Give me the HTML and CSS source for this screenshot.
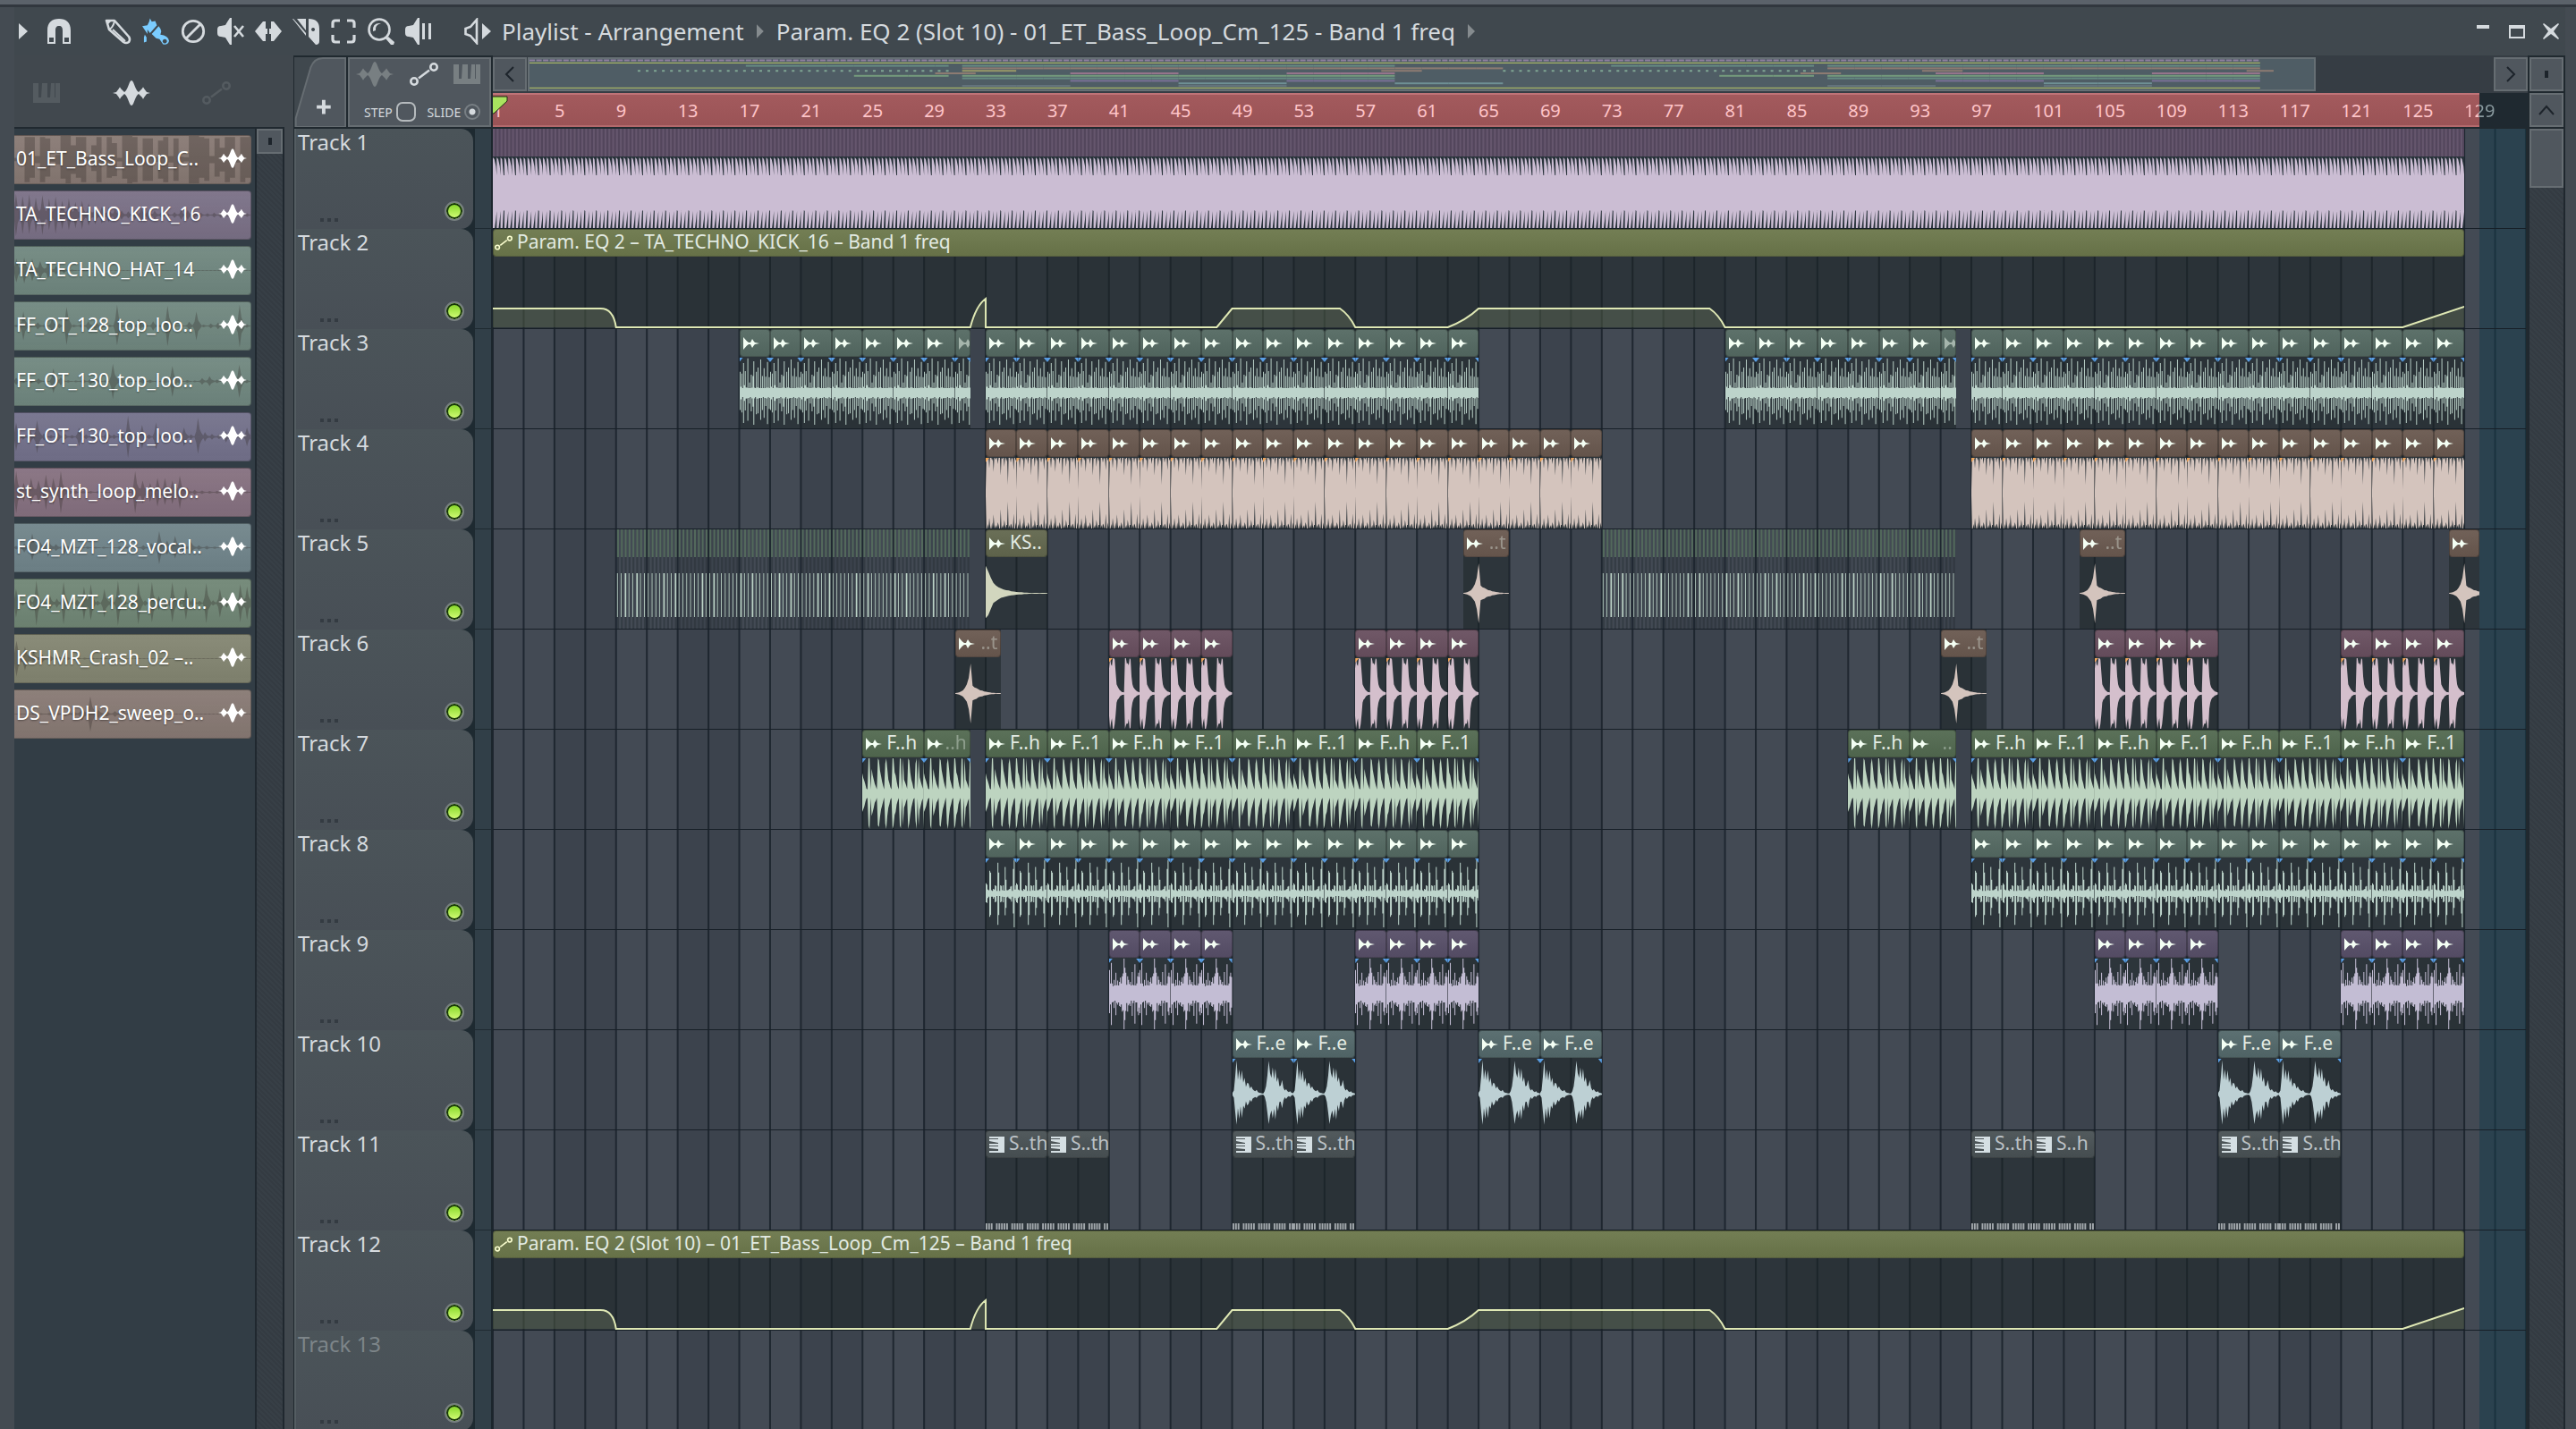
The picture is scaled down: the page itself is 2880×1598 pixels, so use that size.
FILE: index.html
```html
<!DOCTYPE html>
<html lang="en">
<head>
    <meta charset="UTF-8">
    <meta name="viewport" content="width=device-width, initial-scale=1.0">
    <title>Playlist - Arrangement</title>
    <link rel="stylesheet" href="styles.css">
</head>
<body>
    <svg class="sprite" aria-hidden="true">
        <symbol id="i-wave" viewBox="0 0 42 28">
            <path d="M0 14 L4 13 L7 9 Q8 6 9 9 L13 13 Q15 12 17 7 L19 2 Q21 -2 23 2 L25 7 Q27 12 29 13 L33 9 Q34 6 35 9 L38 13 L42 14 L38 15 L35 19 Q34 22 33 19 L29 15 Q27 16 25 21 L23 26 Q21 30 19 26 L17 21 Q15 16 13 15 L9 19 Q8 22 7 19 L4 15 Z"/>
        </symbol>
        <symbol id="i-auto" viewBox="0 0 32 26">
            <g fill="none" stroke="currentColor" stroke-width="2.6"><circle cx="5" cy="21" r="3.7"/><circle cx="27" cy="5" r="3.7"/><path d="M10 17.5 L22 8.500"/></g>
        </symbol>
        <symbol id="i-piano" viewBox="0 0 30 22">
            <path d="M0 0H6V16H9L10 0H16V16H19L20 0H24V16H25V0H30V22H0Z"/>
        </symbol>
        <symbol id="i-clip" viewBox="0 0 18 14">
            <path d="M0 0 L4 4.500 L6 6 L8 6 L10 2 L12 5 L13 6 L18 7 L13 8 L12 9 L10 12 L8 8 L6 8 L4 9.500 L0 14Z"/>
        </symbol>
        <symbol id="i-keys" viewBox="0 0 17 18">
            <path d="M0 0H17V18H0V16H10V14L0 13V11H10V10H0V8H10V7L0 5V3H10V2H0Z"/>
        </symbol>
    </svg>

    <div class="desktop-strip"></div>
    <div class="window">
        <header class="titlebar">
            <nav class="tools">
                <button class="tool menu" aria-label="Menu"><svg viewBox="0 0 10 18"><path d="M0 0L10 9L0 18Z"/></svg></button>
                <button class="tool magnet" aria-label="Snap"><svg viewBox="0 0 30 30"><path d="M2 29V14C2 5 7 1 15 1S28 5 28 14V29H19V14C19 11 18 9 15 9S11 11 11 14V29ZM4 22V27H9V22ZM21 22V27H26V22Z" fill-rule="evenodd"/></svg></button>
                <button class="tool" aria-label="Draw"><svg viewBox="0 0 30 30"><g fill="none" stroke="currentColor" stroke-width="2.600" stroke-linejoin="round"><path d="M2 3H11L27 21Q29 24 27 27Q24 29 21 27L5 13L2 3Z"/><path d="M4 13Q9 12 11 4M9 13L23 26" stroke-width="2"/></g><path d="M2 3H8L3 8Z"/></svg></button>
                <button class="tool active" aria-label="Paint"><svg viewBox="0 0 31 30"><path d="M0 9L6 8L8 4L9 0L11 4L15 3L17 8L9 17L6 13L6 18L4 15ZM11 18L19 9L21 12L22 15L21 19Q30 20 31 26Q30 31 24 30L20 24L16 23ZM26 24a2.500 2.500 0 1 0 .1 0ZM3 19L5 22V27L2 28V22Z" fill-rule="evenodd"/></svg></button>
                <button class="tool" aria-label="Delete"><svg viewBox="0 0 30 30"><g fill="none" stroke="currentColor" stroke-width="2.800"><circle cx="15" cy="15" r="11.700"/><path d="M7 23L23 7"/></g></svg></button>
                <button class="tool" aria-label="Mute"><svg viewBox="0 0 30 30"><path d="M0 13Q0 9 4 9L9 8L14 0H16V30H14L9 22L4 21Q0 21 0 17Z"/><path d="M19 9L29 21M29 9L19 21" stroke="currentColor" stroke-width="2.600"/></svg></button>
                <button class="tool" aria-label="Slip"><svg viewBox="0 0 30 30"><path d="M0 15L9 4H12V26H9ZM30 15L21 4H18V26H21ZM12 12H14V18H12ZM16 12H18V18H16Z"/></svg></button>
                <button class="tool" aria-label="Slice"><svg viewBox="0 0 30 30"><path d="M0 1H1L15 17V20ZM5 1H15V14ZM18 1Q30 1 30 12V26Q30 30 26 30L18 21ZM23 11A2 2 0 1 0 23.100 11Z" fill-rule="evenodd"/></svg></button>
                <button class="tool" aria-label="Select"><svg viewBox="0 0 30 30"><path d="M3 11V6Q3 3 6 3H11M19 3H24Q27 3 27 6V11M27 19V24Q27 27 24 27H19M11 27H6Q3 27 3 24V19" fill="none" stroke="currentColor" stroke-width="3.200"/></svg></button>
                <button class="tool" aria-label="Zoom"><svg viewBox="0 0 30 30"><circle cx="13" cy="13" r="11.500" fill="none" stroke="currentColor" stroke-width="2.600"/><path d="M6 15Q5 5 15 6Q8 8 9 14ZM20 23L23 21L30 27L29 30H26Z"/></svg></button>
                <button class="tool" aria-label="Playback"><svg viewBox="0 0 30 30"><path d="M0 13Q0 9 4 9L9 8L14 0H16V30H14L9 22L4 21Q0 21 0 17ZM19 6H22V24H19ZM26 6H29V24H26Z"/></svg></button>
                <button class="tool speaker" aria-label="Playlist options"><svg viewBox="0 0 30 30"><path d="M1.500 12L7 10L14 2V28L7 20L1.500 18Z" fill="none" stroke="currentColor" stroke-width="2.600"/><path d="M20 6L30 15L20 24Z"/></svg></button>
            </nav>
            <h1 class="crumbs">
                <span>Playlist - Arrangement</span><i class="arrow"></i>
                <span>Param. EQ 2 (Slot 10) - 01_ET_Bass_Loop_Cm_125 - Band 1 freq</span><i class="arrow"></i>
            </h1>
            <div class="window-buttons">
                <button aria-label="Minimise"><svg viewBox="0 0 20 20"><path d="M3 3H17V7H3Z"/></svg></button>
                <button aria-label="Maximise"><svg viewBox="0 0 20 20"><path d="M1 3H19V18H1ZM3 7V16H17V7Z" fill-rule="evenodd"/></svg></button>
                <button aria-label="Close"><svg viewBox="0 0 20 20"><path d="M2 1L10 7L18 1L19 2L13 10L19 18L18 19L10 13L2 19L1 18L7 10L1 2Z"/></svg></button>
            </div>
        </header>

        <div class="main">
            <aside class="picker">
                <div class="picker-tabs">
                    <button aria-label="Patterns" class="off"><svg class="piano"><use href="#i-piano"/></svg></button>
                    <button aria-label="Audio clips"><svg class="wave"><use href="#i-wave"/></svg></button>
                    <button aria-label="Automation clips" class="off"><svg class="auto"><use href="#i-auto"/></svg></button>
                </div>
                <div class="picker-body">
                    <ul class="picker-list" id="pickerList"></ul>
                    <div class="scroll"><button class="scroll-button" aria-label="Picker options"><i class="dot"></i></button></div>
                </div>
            </aside>

            <section class="playlist">
                <div class="playlist-head">
                    <div class="track-tools">
                        <button class="add-track" aria-label="Add track"><svg viewBox="0 0 58 80"><path class="edge" d="M1 80V70L18 12Q22 1 32 1H58V80Z"/><path class="plus" d="M25 55H31V49H35V55H41V59H35V65H31V59H25Z"/></svg></button>
                        <div class="modes">
                            <div class="mode-row">
                                <button aria-label="Audio" class="off"><svg class="wave"><use href="#i-wave"/></svg></button>
                                <button aria-label="Automation"><svg class="auto"><use href="#i-auto"/></svg></button>
                                <button aria-label="Pattern" class="off"><svg class="piano"><use href="#i-piano"/></svg></button>
                            </div>
                            <div class="mode-row">
                                <label for="step">STEP</label><input type="checkbox" id="step">
                                <label for="slide">SLIDE</label><input type="radio" id="slide" checked>
                            </div>
                        </div>
                    </div>
                    <div class="time-head">
                        <div class="overview-row">
                            <button class="nav-button" aria-label="Scroll left"><svg viewBox="0 0 20 20"><path d="M14 2L6 10L14 18"/></svg></button>
                            <div class="overview"><svg id="overview" class="overview-map" viewBox="0 0 1320 34" preserveAspectRatio="none"></svg></div>
                            <button class="nav-button" aria-label="Scroll right"><svg viewBox="0 0 20 20"><path d="M6 2L14 10L6 18"/></svg></button>
                        </div>
                        <div class="ruler">
                            <div class="song-range"></div>
                            <div class="ruler-labels" id="ruler"></div>
                            <svg class="playhead" viewBox="0 0 18 22"><path d="M-3 1H16V6L1 20H-3Z"/></svg>
                        </div>
                    </div>
                    <div class="corner">
                        <button class="nav-button" aria-label="Options"><i class="dot"></i></button>
                        <button class="nav-button" aria-label="Scroll up"><svg viewBox="0 0 20 20"><path d="M2 15L10 6L18 15"/></svg></button>
                    </div>
                </div>
                <div class="playlist-body">
                    <div class="heads" id="heads"></div>
                    <div class="timeline">
                        <svg id="bars" class="bars" viewBox="0 0 1320 10" preserveAspectRatio="none"></svg>
                        <div class="after-end"></div>
                        <div id="lanes"></div>
                    </div>
                    <div class="scroll"><div class="thumb"></div></div>
                </div>
            </section>
        </div>
    </div>
    <script src="script.js"></script>
</body>
</html>
```
FILE: styles.css
```css
* {
    box-sizing: border-box;
}
body {
    margin: 0;
    height: 100vh;
    overflow: hidden;
    display: flex;
    flex-direction: column;
    background-color: #41484e;
    color: #d5dade;
    font-family: "Noto Sans", "Open Sans", sans-serif;
}
button {
    padding: 0;
    border: none;
    background: none;
    color: inherit;
    font: inherit;
    display: flex;
    align-items: center;
    justify-content: center;
}
svg {
    display: block;
    fill: currentColor;
}
.sprite {
    position: absolute;
    width: 0;
    height: 0;
}
.desktop-strip {
    height: 8px;
    flex: none;
    background-color: #5b626a;
    border-bottom: 3px solid #31373e;
}
.window {
    flex: 1;
    min-height: 0;
    display: flex;
    flex-direction: column;
    border-left: 16px solid #444b52;
    border-right: 12px solid #444b52;
}

/* title bar */
.titlebar {
    height: 54px;
    flex: none;
    display: flex;
    align-items: center;
    padding: 4px 6px 4px 5px;
    background-color: #40484e;
}
.tools {
    display: flex;
    align-items: center;
    gap: 12px;
}
.tool svg {
    width: 30px;
    height: 30px;
}
.tool.menu svg {
    width: 10px;
    height: 18px;
}
.tool.magnet {
    margin: 0 24px 0 8px;
}
.tool.active {
    color: #7accff;
}
.tool.speaker {
    margin-left: 24px;
}
.crumbs {
    flex: 1;
    margin: 0 0 0 12px;
    display: flex;
    align-items: center;
    font-size: 26px;
    font-weight: normal;
    white-space: nowrap;
}
.arrow {
    width: 8px;
    height: 16px;
    margin: 0 14px;
    background-color: #858b8e;
    clip-path: polygon(0 0, 100% 50%, 0 100%);
}
.window-buttons {
    display: flex;
    gap: 18px;
}
.window-buttons svg {
    width: 20px;
    height: 20px;
}

.main {
    flex: 1;
    min-height: 0;
    display: flex;
    gap: 10px;
}
.wave {
    width: 42px;
    height: 28px;
}
.auto {
    width: 32px;
    height: 26px;
}
.piano {
    width: 30px;
    height: 22px;
}

/* picker */
.picker {
    width: 302px;
    flex: none;
    display: flex;
    flex-direction: column;
}
.picker-tabs {
    height: 82px;
    flex: none;
    display: flex;
    align-items: center;
    justify-content: space-between;
    padding: 22px 60px 18px 21px;
    border-bottom: 2px solid #202930;
}
.picker-tabs .off {
    color: #545b60;
}
.picker-body {
    flex: 1;
    min-height: 0;
    display: flex;
    background-color: #323d45;
}
.picker-list {
    flex: 1;
    margin: 0;
    padding: 7px 4px 0 0;
    list-style: none;
}
.sample {
    position: relative;
    height: 55px;
    margin-bottom: 7px;
    padding: 0 4px 4px 2px;
    display: flex;
    align-items: center;
    justify-content: space-between;
    border-radius: 0 4px 4px 0;
    border: 1px solid rgba(0, 0, 0, 0.25);
    border-left: none;
    background-image: linear-gradient(rgba(255, 255, 255, 0.06), rgba(0, 0, 0, 0.04));
    color: #fff;
    font-size: 21px;
    white-space: nowrap;
    text-shadow: 0 1px 2px rgba(0, 0, 0, 0.4);
}
.sample .shape {
    position: absolute;
    left: 0;
    top: 0;
    width: 100%;
    height: 100%;
    fill: rgba(50, 45, 40, 0.32);
}
.sample span {
    position: relative;
}
.sample .wave {
    position: relative;
    width: 32px;
    height: 28px;
}
.scroll {
    flex: none;
    border-left: 2px solid #20282f;
    border-right: 2px solid #20282f;
    background: repeating-linear-gradient(45deg, #373f46 0 2px, #343b42 2px 4px);
}
.picker .scroll {
    width: 33px;
}
.playlist .scroll {
    width: 42px;
}
.scroll-button, .thumb, .nav-button {
    background-color: #50575e;
    border: 2px solid #666d72;
}
.scroll-button {
    width: 100%;
    height: 28px;
}
.thumb {
    height: 66px;
}
.dot {
    width: 4px;
    height: 8px;
    background-color: #1d242b;
}

/* playlist header */
.playlist {
    flex: 1;
    min-width: 0;
    display: flex;
    flex-direction: column;
    background-color: #20292f;
}
.playlist-head {
    height: 82px;
    flex: none;
    display: flex;
}
.track-tools {
    width: 223px;
    flex: none;
    display: flex;
    gap: 2px;
    padding: 2px 2px 0 1px;
}
.add-track {
    width: 58px;
    height: 78px;
    background-color: #40484e;
}
.add-track svg {
    width: 58px;
    height: 78px;
}
.edge {
    fill: #50575e;
    stroke: #666d72;
    stroke-width: 2px;
}
.plus {
    fill: #d5dade;
}
.modes {
    flex: 1;
    height: 78px;
    background-color: #50575e;
    border: 2px solid #666d72;
    display: flex;
    flex-direction: column;
    justify-content: space-between;
    padding: 3px 10px 4px 7px;
}
.mode-row {
    display: flex;
    align-items: center;
    justify-content: space-between;
}
.mode-row .off {
    color: #787f82;
}
.mode-row label {
    font-size: 14px;
    margin-left: 9px;
}
.mode-row input {
    appearance: none;
    margin: 0;
}
.mode-row input[type="checkbox"] {
    width: 22px;
    height: 22px;
    border: 2px solid #b5babd;
    border-radius: 7px;
}
.mode-row input[type="radio"] {
    width: 18px;
    height: 18px;
    border: 2px solid #787f84;
    border-radius: 50%;
    background: radial-gradient(#d5dade 0 3px, #50575e 4px);
}
.time-head {
    flex: 1;
    min-width: 0;
}
.overview-row {
    height: 42px;
    display: flex;
    padding: 2px 0;
    background-color: #363d44;
}
.nav-button {
    width: 38px;
    height: 38px;
    flex: none;
}
.nav-button svg {
    width: 20px;
    height: 20px;
    fill: none;
    stroke: #1d242b;
    stroke-width: 2px;
}
.overview {
    flex: 1;
    margin: 0 1px;
}
.overview-map {
    width: 91%;
    height: 38px;
    background-color: #4f5d65;
    border: 2px solid #666f74;
}
.ruler {
    position: relative;
    height: 38px;
    padding-right: 2px;
    background-color: #1f2930;
    display: grid;
    grid-template-columns: repeat(132, 1fr);
    overflow: hidden;
}
.song-range {
    grid-area: 1 / 1 / 2 / 130;
    background: linear-gradient(#a35a5d, #9a5356);
    border-top: 2px solid #bf7478;
    border-bottom: 2px solid #b3696c;
}
.ruler-labels {
    grid-area: 1 / 1 / 2 / -1;
    display: grid;
    grid-template-columns: repeat(33, 1fr);
    align-items: center;
    color: #ffc4c8;
    font-size: 20px;
}
.ruler-labels span {
    width: 0;
}
.ruler-labels .last {
    width: 40px;
    color: transparent;
    background: linear-gradient(to right, #ffc4c8 16px, #8a9a9f 16px);
    background-clip: text;
}
.playhead {
    position: absolute;
    left: 0;
    top: 3px;
    width: 18px;
    height: 22px;
    fill: #a9e35f;
    stroke: #1d2a12;
    stroke-width: 1px;
}
.corner {
    width: 42px;
    flex: none;
    display: flex;
    flex-direction: column;
    gap: 2px;
    padding: 2px;
}

/* playlist body */
.playlist-body {
    flex: 1;
    min-height: 0;
    display: flex;
    overflow: hidden;
}
.heads {
    width: 223px;
    flex: none;
    padding-left: 1px;
    border-right: 2px solid #1c262d;
}
.head {
    height: 112px;
    display: grid;
    grid-template-columns: 200px 18px;
    gap: 2px;
    background-color: #1e2a31;
}
.head::after {
    content: "";
    margin-bottom: 1px;
    background-color: #313f48;
}
.head-card {
    position: relative;
    padding: 0 12px 0 2px;
    border-left: 2px solid #545d62;
    border-radius: 0 14px 14px 0;
    background: linear-gradient(#4b5459, #484f56);
    font-size: 24px;
    line-height: 30px;
}
.head-card.idle {
    color: #7d8589;
}
.led {
    position: absolute;
    right: 10px;
    bottom: 9px;
    width: 22px;
    height: 22px;
    border: 2px solid #777f80;
    border-radius: 50%;
    background: linear-gradient(#7ed321, #d9ff7d);
    box-shadow: inset 0 0 0 2px #17350a;
}
.more {
    position: absolute;
    left: 27px;
    bottom: 8px;
    width: 20px;
    height: 4px;
    background: repeating-linear-gradient(to right, #343b42 0 4px, transparent 4px 8px);
}
.timeline {
    position: relative;
    flex: 1;
    min-width: 0;
    padding-right: 2px;
    display: grid;
    grid-template-columns: repeat(132, 1fr);
    overflow: hidden;
}
.bars {
    grid-area: 1 / 1 / 2 / -1;
    width: 100%;
    height: 100%;
}
.after-end {
    grid-area: 1 / 130 / 2 / -1;
    background-color: rgba(24, 60, 74, 0.55);
}
#lanes {
    grid-area: 1 / 1 / 2 / -1;
    height: 0;
}
.lane {
    height: 112px;
    display: grid;
    grid-template-columns: repeat(132, 1fr);
    border-bottom: 1px solid #171f27;
}
.clip {
    grid-row: 1;
    min-width: 0;
    height: 111px;
    display: flex;
    flex-direction: column;
    background-color: rgba(28, 36, 38, 0.55);
}
.clip-head {
    height: 31px;
    flex: none;
    display: flex;
    align-items: center;
    padding: 0 3px;
    border: 1px solid rgba(0, 0, 0, 0.25);
    border-radius: 4px;
    font-size: 21px;
    line-height: 26px;
    white-space: nowrap;
    overflow: hidden;
    background-image: linear-gradient(rgba(255, 255, 255, 0.05), rgba(0, 0, 0, 0.05));
    color: #e2eae2;
}
.clip-head svg {
    width: 18px;
    height: 14px;
    flex: none;
    color: #f4fff4;
}
.clip-head span {
    margin-left: 5px;
    padding-bottom: 3px;
}
.clip-head .dim {
    margin-left: auto;
    opacity: 0.4;
}
.clip.short .clip-head svg {
    opacity: 0.5;
}
.clip-body {
    position: relative;
    flex: 1;
    margin-top: 1px;
    min-height: 0;
}
.clip-body svg {
    position: absolute;
    left: 0;
    top: 0;
    width: 100%;
    height: 100%;
}
.mark-blue .clip-body::before, .mark-orange .clip-body::before, .mark-blue .clip-body::after {
    content: "";
    position: absolute;
    z-index: 1;
    top: 0;
    left: 0;
    width: 4px;
    height: 5px;
    background-color: #5a9fe6;
    clip-path: polygon(0 0, 100% 0, 0 100%);
}
.mark-blue .clip-body::after {
    left: auto;
    right: 0;
    clip-path: polygon(0 0, 100% 0, 100% 100%);
}
.mark-orange .clip-body::before {
    background-color: #f0a55a;
}
.green .clip-head { background-color: #546962; }
.green .clip-body { color: #bdd4cb; }
.brown .clip-head { background-color: #69594f; }
.brown .clip-body { color: #d4c4bd; }
.olive .clip-head { background-color: #62674e; }
.olive .clip-body { color: #d2d6be; }
.rose .clip-head { background-color: #684f5f; }
.rose .clip-body { color: #d4bfcc; }
.leaf .clip-head { background-color: #526950; }
.leaf .clip-body { color: #bdd4c0; }
.violet .clip-head { background-color: #574f68; }
.violet .clip-body { color: #c3bdd4; }
.teal .clip-head { background-color: #53686a; }
.teal .clip-body { color: #bdd0d4; }
.pattern .clip-head { background-color: #495154; color: #bcc2c6; }
.pattern .clip-head svg { width: 17px; height: 18px; color: #d5dfe3; }
.pattern .clip-body svg { color: #a2a8ac; }
.automation .clip-head { background-color: #6b774b; padding-left: 1px; }
.automation .clip-head svg { width: 20px; height: 19px; color: #fbffd0; }
.dense {
    grid-row: 1;
    width: 100%;
    height: 111px;
}
```
FILE: script.js
```js
const NS = 'http://www.w3.org/2000/svg';
const ROW = 112;

// peak levels (0-100) of one clip, evenly spaced from its start to its end
const waves = {
    hat: [60, 18, 55, 14, 85, 22, 62, 16, 15, 98, 14, 30, 14, 52, 15, 48, 90, 15, 14, 60, 16, 72, 15, 14, 95, 14, 48, 14, 70, 14, 46, 15, 88, 15, 45, 14],
    bass: [8, 100, 100, 97, 100, 70, 100, 100, 100, 92, 100, 60, 100, 100, 95, 100, 100, 82, 100, 100, 100, 50, 100, 97, 100, 100, 75, 100, 100, 90, 100, 24, 100, 100, 100, 86, 100, 98, 100, 65, 100, 100, 92, 100],
    synth: [70, 100, 82, 78, 100, 100, 96, 60, 26, 20, 15, 11, 8, 6, 4, 4, 3, 100, 100, 84, 86, 80, 100, 96, 48, 26, 18, 14, 11, 8, 6, 5, 4, 3],
    perc: [58, 44, 36, 26, 14, 12, 100, 100, 12, 70, 52, 40, 28, 20, 12, 100, 94, 66, 50, 34, 22, 12, 85, 100, 70, 40, 30, 18, 12, 100, 100, 60, 52, 34, 20, 12, 100, 98, 12, 100, 40, 32, 24, 14, 100, 94, 60, 40, 30, 16, 12, 85, 100, 14, 100, 46, 34, 24, 14, 100],
    tick: [30, 26, 12, 10, 65, 60, 10, 8, 14, 12, 24, 22, 8, 88, 60, 8, 24, 22, 10, 24, 9, 76, 40, 10, 10, 12, 14, 20, 22, 8, 70, 95, 12, 24],
    pluck: [68, 30, 88, 30, 22, 40, 24, 60, 25, 38, 24, 34, 46, 30, 50, 58, 100, 74, 60, 26, 50, 40, 28, 34, 24, 62, 26, 24, 84, 24, 30, 50, 60, 48],
    vocal: [4, 10, 50, 96, 40, 70, 38, 68, 32, 46, 20, 32, 30, 16, 22, 14, 10, 8, 12, 6, 4, 3, 2, 2, 8, 22, 52, 94, 60, 46, 76, 42, 72, 34, 48, 22, 24, 40, 18, 10, 14, 8, 6, 8, 4, 3, 2],
    crash: [78, 62, 44, 30, 22, 17, 14, 11, 9, 8, 6, 5, 4, 3, 3, 2, 2, 1, 1, 1, 1, 1, 1, 1, 1],
    sweep: [1, 2, 3, 6, 9, 16, 26, 44, 85, 22, 17, 15, 12, 9, 8, 6, 5, 4, 3, 2, 2, 1, 1, 1, 1]
};
const stepped = ['hat', 'tick', 'pluck'];

function makeSvg(width, height, html, cls) {
    const svg = document.createElementNS(NS, 'svg');
    svg.setAttribute('viewBox', `0 0 ${width} ${height}`);
    svg.setAttribute('preserveAspectRatio', 'none');
    if (cls) svg.setAttribute('class', cls);
    svg.innerHTML = html;
    return svg;
}

function wavePath(peaks) {
    const last = peaks.length - 1;
    const top = peaks.map((p, i) => `${i},${100 - p}`);
    const bottom = peaks.map((p, i) => `${i},${100 + (i % 3 ? p : p * 0.9)}`).reverse();
    return { width: last, d: `M${top.join('L')}L${bottom.join('L')}Z` };
}

function stepPath(peaks) {
    const d = peaks.map((p, i) => `M${i} ${100 - p}h1V${100 + (i % 3 ? p : p * 0.8)}h-1Z`).join('');
    return { width: peaks.length, d };
}

// automation curve in bars, zero line at the bottom of the clip
const curve = 'M0 57H7C7.600 57 7.900 66 8 78H31C31.200 65 31.500 52 32 46V78H47L48 57H55Q55.600 64 56 78H62Q63.200 70 64 57H79Q79.600 64 80 78H124L128 55';

function clip(kind, color, start, end, extra = {}) {
    return { kind, color, start, end, ...extra };
}

function repeat(kind, color, ranges, step, extra = {}) {
    const list = [];
    ranges.forEach(([from, to]) => {
        for (let bar = from, i = 0; bar < to; bar += step, i++) {
            const label = extra.labels ? extra.labels[i % extra.labels.length] : '';
            list.push(clip(kind, color, bar, Math.min(bar + step, to), { label, mark: extra.mark }));
        }
    });
    return list;
}

const sweepClip = (start, end, label = '..t') => clip('sweep', 'brown', start, end, { dim: label });
const tracks = [
    [clip('kick', '', 1, 129)],
    [clip('auto', 'automation', 1, 129, { label: 'Param. EQ 2 – TA_TECHNO_KICK_16 – Band 1 freq' })],
    repeat('hat', 'green', [[17, 32], [33, 65], [81, 96], [97, 129]], 2, { mark: 'blue' }),
    repeat('bass', 'brown', [[33, 73], [97, 129]], 2, { mark: 'orange' }),
    [clip('hits', '', 9, 32), clip('crash', 'olive', 33, 37, { label: 'KS..' }), sweepClip(64, 67),
        clip('hits', '', 73, 96), sweepClip(104, 107), sweepClip(128, 130, '')],
    [sweepClip(31, 34), sweepClip(95, 98),
        ...repeat('synth', 'rose', [[41, 49], [57, 65], [105, 113], [121, 129]], 2, { mark: 'orange' })],
    [clip('perc', 'leaf', 25, 29, { label: 'F..h', mark: 'blue' }), clip('perc', 'leaf', 29, 32, { dim: '..h', mark: 'blue' }),
        clip('perc', 'leaf', 89, 93, { label: 'F..h', mark: 'blue' }), clip('perc', 'leaf', 93, 96, { dim: '..', mark: 'blue' }),
        ...repeat('perc', 'leaf', [[33, 65], [97, 129]], 4, { labels: ['F..h', 'F..1'], mark: 'blue' })],
    repeat('tick', 'green', [[33, 65], [97, 129]], 2, { mark: 'blue' }),
    repeat('pluck', 'violet', [[41, 49], [57, 65], [105, 113], [121, 129]], 2, { mark: 'blue' }),
    repeat('vocal', 'teal', [[49, 57], [65, 73], [113, 121]], 4, { labels: ['F..e'], mark: 'blue' }),
    [...repeat('notes', 'pattern', [[33, 41], [49, 57], [113, 121]], 4, { labels: ['S..th'] }),
        ...repeat('notes', 'pattern', [[97, 105]], 4, { labels: ['S..th', 'S..h'] })],
    [clip('auto', 'automation', 1, 129, { label: 'Param. EQ 2 (Slot 10) – 01_ET_Bass_Loop_Cm_125 – Band 1 freq' })],
    []
];

function kickSvg() {
    const beats = 512;
    let stripes = '';
    let body = '';
    for (let i = 0; i < beats; i++) {
        const x = i * 10;
        const deep = i % 3 === 2 ? 52 : 42;
        stripes += `M${x} 0h5v31h-5Z`;
        body += `M${x} 32L${x + 4} 34L${x + 8} ${deep}L${x + 10} 52V92L${x + 8} ${143 - deep}L${x + 5} 111H${x}Z`;
    }
    return makeSvg(beats * 10, 111, `<path fill="#28323a" d="M0 0h5120v111H0Z"/><path fill="#53465c" d="M0 0h5120v31H0Z"/><path fill="#65566d" d="${stripes}"/><path fill="#cbbdd3" d="${body}"/>`, 'dense');
}

function hitsSvg(bars) {
    let head = '';
    let hits = '';
    for (let i = 0; i < bars * 4; i++) {
        const x = i * 10 + 2;
        head += `M${x} 0h5v31h-5Z`;
        const width = i % 10 === 2 || i % 10 === 5 ? 4 : 2;
        hits += `M${x} 49h${width}v49h-${width}Z`;
    }
    const shade = head.replace(/v31/g, 'v111');
    return makeSvg(bars * 40, 111, `<path fill="#2b333b" opacity=".6" d="${shade}"/><path fill="#53695c" d="${head}"/><path fill="#bdd4c8" d="${hits}"/>`, 'dense');
}

function bodySvg(item) {
    const bars = item.end - item.start;
    if (item.kind === 'auto') {
        return makeSvg(bars, 79, `<path d="${curve}V78H0Z" fill="rgba(200,215,140,.16)"/><path d="${curve}" fill="none" stroke="#dfe8b4" stroke-width="2" vector-effect="non-scaling-stroke"/>`);
    }
    if (item.kind === 'notes') {
        let d = '';
        for (let i = 0; i < 24; i++) {
            if (i % 6 !== 3) d += `M${i * 3} 72h2v7h-2Z`;
        }
        return makeSvg(72, 79, `<path d="${d}"/>`);
    }
    const peaks = waves[item.kind];
    const wave = stepped.includes(item.kind) ? stepPath(peaks) : wavePath(peaks);
    const full = { hat: 2, perc: 4 }[item.kind] || (item.kind === 'sweep' ? 3 : bars);
    return makeSvg(wave.width * bars / full, 200, `<path d="${wave.d}"/>`);
}

function buildClip(item) {
    let el;
    if (item.kind === 'kick') {
        el = kickSvg();
    } else if (item.kind === 'hits') {
        el = hitsSvg(item.end - item.start);
    } else {
        el = document.createElement('div');
        el.className = `clip ${item.color}`;
        if (item.mark) el.classList.add(`mark-${item.mark}`);
        if (item.end - item.start === 1) el.classList.add('short');
        const icon = { auto: 'i-auto', notes: 'i-keys' }[item.kind] || 'i-clip';
        const label = item.dim ? `<span class="dim">${item.dim}</span>` : item.label ? `<span>${item.label}</span>` : '';
        el.innerHTML = `<div class="clip-head"><svg><use href="#${icon}"/></svg>${label}</div><div class="clip-body"></div>`;
        el.lastChild.appendChild(bodySvg(item));
    }
    el.style.gridColumn = `${item.start} / ${item.end}`;
    return el;
}

tracks.forEach((clips, i) => {
    const head = document.createElement('div');
    head.className = 'head';
    head.innerHTML = `<div class="head-card${clips.length ? '' : ' idle'}">Track ${i + 1}<i class="more"></i><i class="led"></i></div>`;
    document.getElementById('heads').appendChild(head);

    const lane = document.createElement('div');
    lane.className = 'lane';
    clips.forEach(item => lane.appendChild(buildClip(item)));
    document.getElementById('lanes').appendChild(lane);
});

// 4 bar shading with a line every 2 bars
let shades = '<rect width="1320" height="10" fill="#434a54"/>';
for (let bar = 4; bar < 132; bar += 8) shades += `<rect x="${bar * 10}" width="40" height="10" fill="#3c434d"/>`;
for (let bar = 0; bar <= 132; bar += 2) shades += `<path d="M${bar * 10} 0V10" stroke="#1f2730" stroke-width="2" vector-effect="non-scaling-stroke"/>`;
document.getElementById('bars').innerHTML = shades;

for (let bar = 1; bar <= 129; bar += 4) {
    const label = document.createElement('span');
    label.textContent = bar;
    if (bar === 129) label.className = 'last';
    document.getElementById('ruler').appendChild(label);
}

const mapColors = { green: '#668a82', brown: '#8d7b72', olive: '#989868', rose: '#96748c', leaf: '#749a7c', violet: '#7a7096', teal: '#6f9094', pattern: '#63737c', automation: '#a9b768' };
let map = '<path d="M0 1.500H1280" stroke="#8f7fa0" stroke-width="2" stroke-dasharray="4 1"/>';
tracks.forEach((clips, row) => {
    const y = 1 + row * 2.800;
    clips.forEach(item => {
        const x = (item.start - 1) * 10;
        const width = (item.end - item.start) * 10;
        if (item.kind === 'hits') map += `<path d="M${x} ${y + 1}h${width}" stroke="#7fa593" stroke-width="2" stroke-dasharray="2 4"/>`;
        else if (item.kind !== 'kick') map += `<rect x="${x}" y="${y}" width="${width}" height="${item.kind === 'auto' ? 1.200 : 2}" fill="${mapColors[item.color]}"/>`;
    });
});
document.getElementById('overview').innerHTML = map;

// envelope of each sample, drawn dark behind its name
const samples = [
    ['01_ET_Bass_Loop_C..', '#867872', [8, 20, 95, 95, 15, 95, 90, 10, 20, 100, 100, 60, 95, 95, 12, 60, 95, 20, 95, 70, 8, 100, 100, 95, 20, 90, 90, 12, 80, 95, 15, 90, 12, 10, 100, 100, 95, 90, 15, 90, 50, 95, 95, 12, 95, 95]],
    ['TA_TECHNO_KICK_16', '#796f85', [90, 80, 88, 75, 84, 70, 78, 60, 70, 56, 60, 50, 40, 36, 34, 26, 20, 16, 22, 30, 24, 20, 12, 8, 12, 20, 22, 16, 10, 8, 10, 12, 8, 10, 6, 8]],
    ['TA_TECHNO_HAT_14', '#6f867e', [50, 55, 50, 40, 35, 20, 10, 4, 2, 2, 2, 2, 2, 2, 2, 2, 2, 2, 2, 2, 2, 2, 2, 2, 2, 2, 2, 2, 2, 2]],
    ['FF_OT_128_top_loo..', '#6f867e', [5, 60, 5, 15, 8, 30, 10, 80, 6, 8, 20, 25, 8, 5, 90, 6, 12, 30, 8, 20, 5, 85, 8, 5, 18, 60, 6, 10, 14, 8, 30, 90, 8]],
    ['FF_OT_130_top_loo..', '#6f867e', [15, 5, 8, 12, 5, 55, 18, 5, 4, 10, 12, 8, 5, 75, 20, 6, 4, 10, 8, 5, 12, 65, 10, 6, 4, 14, 22, 8, 4, 5, 70, 8]],
    ['FF_OT_130_top_loo..', '#72708a', [60, 12, 30, 70, 15, 8, 20, 12, 8, 40, 10, 15, 8, 30, 10, 20, 90, 14, 50, 10, 60, 12, 20, 8, 40, 10, 80, 20, 12, 10, 24, 30, 12, 40]],
    ['st_synth_loop_melo..', '#846f7e', [90, 40, 60, 50, 75, 60, 90, 20, 8, 6, 6, 5, 5, 5, 5, 5, 90, 50, 40, 60, 60, 50, 70, 20, 10, 8, 6, 6, 5, 5, 4, 4]],
    ['FO4_MZT_128_vocal..', '#6f8389', [8, 20, 60, 25, 40, 15, 30, 10, 6, 5, 4, 4, 4, 6, 5, 5, 10, 20, 70, 30, 50, 20, 25, 10, 8, 5, 4, 4, 4, 4]],
    ['FO4_MZT_128_percu..', '#6f8574', [60, 10, 20, 95, 15, 30, 20, 90, 10, 15, 70, 80, 10, 60, 20, 95, 10, 20, 90, 12, 90, 30, 20, 90, 12, 70, 20, 10, 85, 12, 60, 20, 10, 80, 70]],
    ['KSHMR_Crash_02 –..', '#828470', [75, 50, 30, 18, 12, 9, 7, 5, 4, 3, 3, 2, 2, 2, 2, 2, 2, 2, 2, 2, 2, 2, 2, 2, 2, 2, 2, 2]],
    ['DS_VPDH2_sweep_o..', '#867872', [2, 2, 3, 4, 5, 6, 8, 12, 30, 75, 18, 14, 12, 10, 6, 4, 3, 2, 2, 2, 2, 2, 2, 2, 2, 2, 2, 2, 2]]
];
samples.forEach(([name, color, peaks], i) => {
    const item = document.createElement('li');
    item.className = 'sample';
    item.style.backgroundColor = color;
    item.innerHTML = `<span>${name}</span><svg class="wave"><use href="#i-wave"/></svg>`;
    // loops get a short decay after every hit, the first one is made of solid blocks
    const wave = i === 0 ? stepPath(peaks) : wavePath(peaks.flatMap(p => [p * 0.3, p, p * 0.4, Math.max(2, p * 0.2)]));
    item.prepend(makeSvg(wave.width, 200, `<path d="${wave.d}"/>`, 'shape'));
    document.getElementById('pickerList').appendChild(item);
});
```
